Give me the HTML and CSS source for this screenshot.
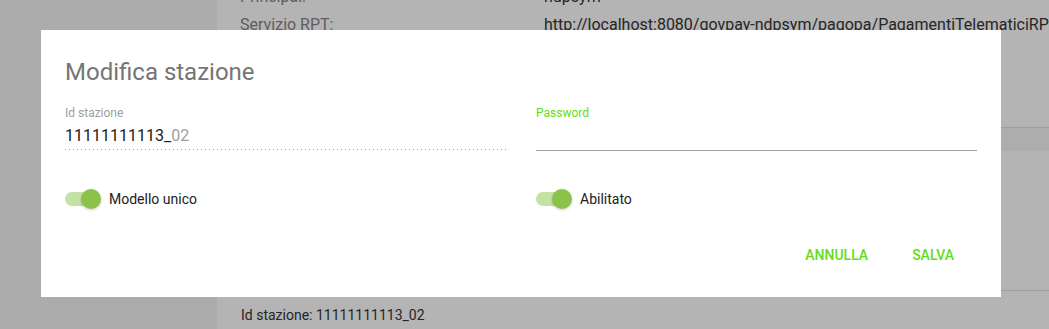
FILE: index.html
```html
<!DOCTYPE html>
<html lang="it">

<head>
    <meta charset="UTF-8">
    <meta name="viewport" content="width=device-width, initial-scale=1.0">
    <title>Modifica stazione</title>
    <link rel="stylesheet" href="styles.css">
</head>

<body>

    <div class="app">
        <aside class="sidebar"></aside>

        <main class="main">
            <div class="detail">
                <div class="detail-row">
                    <span class="detail-label">Principal:</span>
                    <span class="detail-value">ndpsym</span>
                </div>
                <div class="detail-row">
                    <span class="detail-label">Servizio RPT:</span>
                    <span class="detail-value">http://localhost:8080/govpay-ndpsym/pagopa/PagamentiTelematiciRP</span>
                </div>
            </div>

            <section class="card">
                <div class="card-header"></div>
                <div class="card-body"></div>
                <div class="card-footer">Id stazione: 11111111113_02</div>
            </section>
        </main>
    </div>

    <!-- dialog sits over the page -->
    <div class="dialog">
        <h2 class="dialog-title">Modifica stazione</h2>

        <div class="fields">
            <div class="field">
                <label class="field-label">Id stazione</label>
                <div class="field-value disabled">11111111113_<span class="suffix">02</span></div>
            </div>
            <div class="field">
                <label class="field-label focused">Password</label>
                <input class="field-input" type="password">
            </div>
        </div>

        <div class="toggles">
            <label class="toggle">
                <span class="toggle-track"><span class="toggle-thumb"></span></span>
                <span class="toggle-label">Modello unico</span>
            </label>
            <label class="toggle">
                <span class="toggle-track"><span class="toggle-thumb"></span></span>
                <span class="toggle-label">Abilitato</span>
            </label>
        </div>

        <div class="actions">
            <button class="flat-button">Annulla</button>
            <button class="flat-button">Salva</button>
        </div>
    </div>

</body>

</html>
```

FILE: styles.css
```css
body {
    font-family: Roboto, "Liberation Sans", sans-serif;
    margin: 0;
    overflow: hidden;
    background-color: #b4b4b4;
}

.app {
    display: flex;
    height: 329px;
    overflow: hidden;
}

.sidebar {
    width: 217px;
    flex-shrink: 0;
    background-color: #acacac;
}

.main {
    flex: 1;
    min-width: 0;
    overflow: hidden;
    background-color: #b4b4b4;
}

.detail {
    margin-top: -18px;
    padding-left: 23px;
}

.detail-row {
    display: flex;
    height: 28px;
    align-items: center;
    font-size: 16px;
    white-space: nowrap;
}

.detail-label {
    width: 304px;
    flex-shrink: 0;
    color: #5e5e5e;
}

.detail-value {
    color: #252525;
}

.card {
    margin-top: 89px;
}

.card-header {
    height: 23px;
    border-top: 1px solid #9e9e9e;
    background-color: #adadad;
}

.card-body {
    height: 139px;
}

.card-footer {
    border-top: 1px solid #9e9e9e;
    padding: 16px 24px;
    font-size: 14px;
    color: #252525;
}

.dialog {
    position: fixed;
    left: 41px;
    top: 30px;
    width: 960px;
    height: 267px;
    box-sizing: border-box;
    padding: 26px 24px 24px;
    background-color: #fff;
    display: flex;
    flex-direction: column;
}

.dialog-title {
    margin: 0;
    font-size: 24px;
    font-weight: 400;
    line-height: 32px;
    color: #757575;
}

.fields {
    display: flex;
    gap: 30px;
    margin-top: 19px;
}

.field {
    flex: 1;
    display: flex;
    flex-direction: column;
}

.field-label {
    font-size: 12px;
    line-height: 16px;
    margin-top: -2px;
    margin-bottom: 2px;
    color: #9e9e9e;
}

.field-label.focused {
    color: #64dd17;
}

.field-value {
    font-size: 16px;
    line-height: 24px;
    color: #212121;
    padding-top: 1px;
    padding-bottom: 2px;
    background-image: linear-gradient(to right, #a0a0a0 1px, transparent 1px);
    background-size: 4px 1px;
    background-repeat: repeat-x;
    background-position: left bottom;
}

.field-value .suffix {
    color: #9e9e9e;
}

.field-input {
    height: 27px;
    border: none;
    border-bottom: 1px solid #9e9e9e;
    padding: 0;
    outline: none;
    font-size: 16px;
}

.toggles {
    display: flex;
    gap: 30px;
    margin-top: 36px;
}

.toggle {
    flex: 1;
    display: flex;
    align-items: center;
    gap: 8px;
    height: 24px;
}

.toggle-track {
    position: relative;
    width: 34px;
    height: 14px;
    border-radius: 7px;
    background-color: #c5e1a5;
}

.toggle-thumb {
    position: absolute;
    right: -2px;
    top: -3px;
    width: 20px;
    height: 20px;
    border-radius: 50%;
    background-color: #8bc34a;
    box-shadow: 0 1px 3px rgba(0, 0, 0, 0.2);
}

.toggle-label {
    margin-left: 2px;
    font-size: 14px;
    color: #212121;
}

.actions {
    display: flex;
    justify-content: flex-end;
    gap: 12px;
    margin-top: auto;
    padding-right: 7px;
}

.flat-button {
    height: 36px;
    padding: 0 16px;
    border: none;
    background: none;
    font-family: inherit;
    font-size: 14px;
    font-weight: 500;
    text-transform: uppercase;
    color: #64dd17;
    cursor: pointer;
}
```
